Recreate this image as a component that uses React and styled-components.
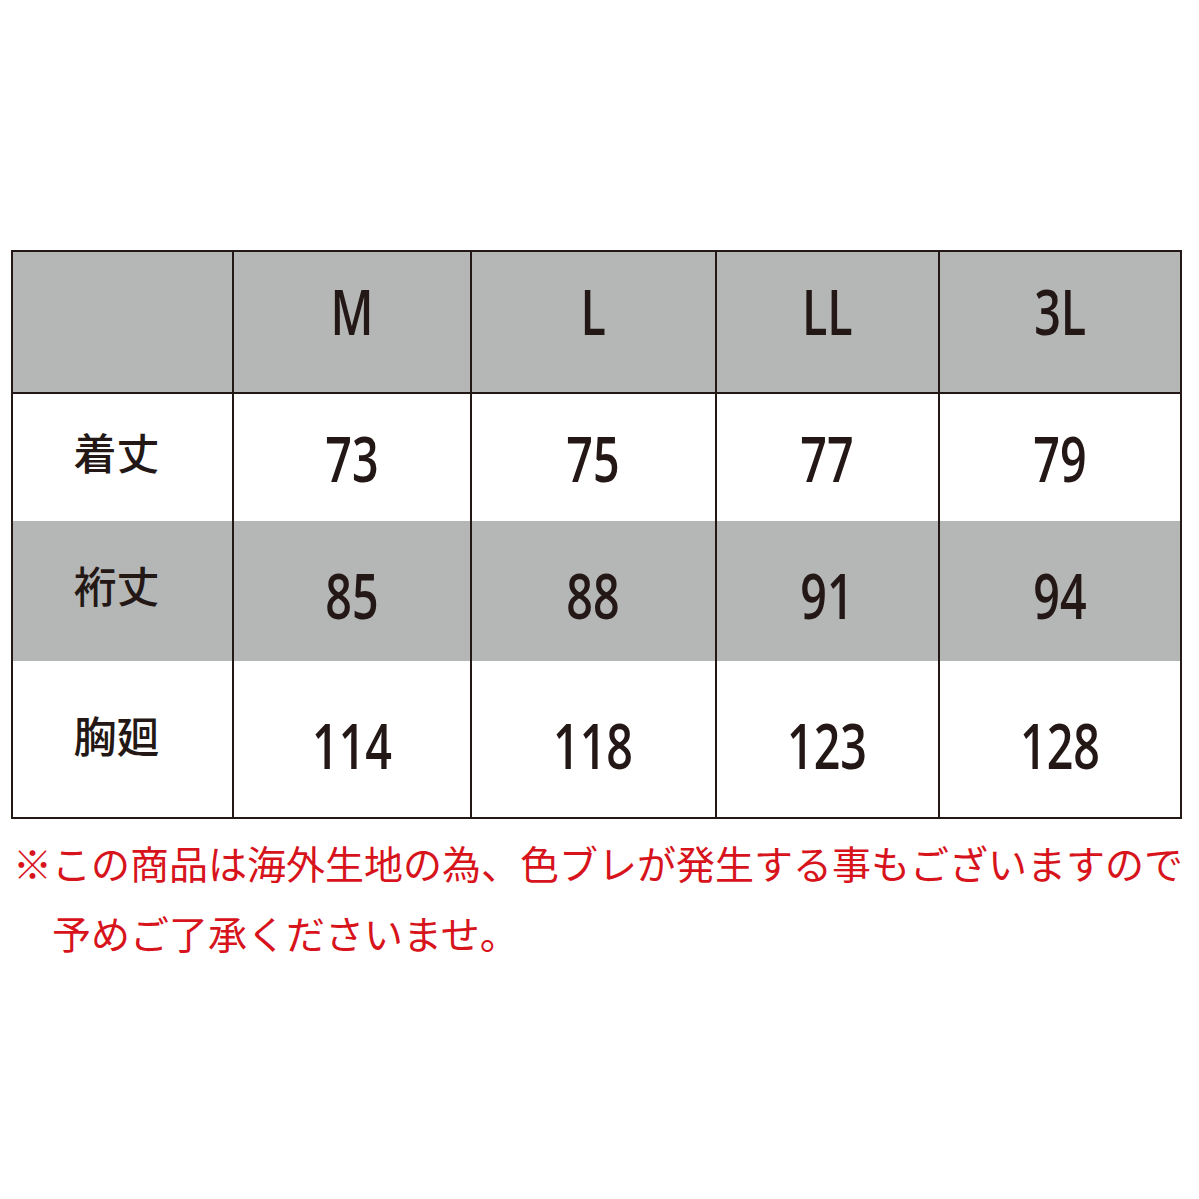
import React from "react";
import styled, { createGlobalStyle } from "styled-components";

const Global = createGlobalStyle`
  html, body { margin: 0; padding: 0; background: #ffffff; }
  body { width: 1199px; height: 1199px; overflow: hidden; }
`;

const COLS = "219px 238px 245px 223px 242px";
const INK = "#231815";
const GRAY = "#b5b6b6";

const Page = styled.div`
  padding-top: 250px;
  padding-left: 11px;
`;

const Table = styled.div`
  box-sizing: border-box;
  width: 1171px;
  border: 2px solid ${INK};
  display: flex;
  flex-direction: column;
`;

const Row = styled.div`
  display: grid;
  grid-template-columns: ${COLS};
  height: ${(p) => p.$h}px;
  background: ${(p) => (p.$gray ? GRAY : "#ffffff")};
  box-sizing: border-box;
  border-bottom: ${(p) => (p.$rule ? `2px solid ${INK}` : "none")};
`;

const Cell = styled.div`
  box-sizing: border-box;
  display: flex;
  align-items: center;
  justify-content: center;
  border-left: ${(p) => (p.$first ? "none" : `2px solid ${INK}`)};
  padding-top: ${(p) => p.$pt || 0}px;
  padding-bottom: ${(p) => p.$pb || 0}px;
  padding-right: ${(p) => p.$pr || 0}px;
`;

const Num = styled.span`
  display: inline-block;
  font-family: "Open Sans", "Liberation Sans", sans-serif;
  font-size: 63px;
  font-weight: 600;
  line-height: 1;
  color: ${INK};
  transform: scaleX(0.74);
  transform-origin: center;
`;

const Label = styled.span`
  font-family: "Noto Sans CJK JP", "Noto Sans", sans-serif;
  font-size: 43px;
  line-height: 1;
  color: ${INK};
  font-weight: 500;
`;

const Note = styled.div`
  font-family: "Noto Sans CJK JP", "Noto Sans", sans-serif;
  font-size: 39px;
  line-height: 70px;
  color: #d7131c;
  margin-top: 8px;
  padding-left: 2px;
  white-space: nowrap;
`;

const NoteLine = styled.div`
  padding-left: ${(p) => p.$indent || 0}px;
`;

const header = ["M", "L", "LL", "3L"];
const rows = [
  { label: "着丈", vals: ["73", "75", "77", "79"], h: 127, gray: false, pt: 0, lpb: 12 },
  { label: "裄丈", vals: ["85", "88", "91", "94"], h: 140, gray: true, pt: 6, lpb: 14 },
  { label: "胸廻", vals: ["114", "118", "123", "128"], h: 156, gray: false, pt: 10, lpb: 10 },
];

export default function App() {
  return (
    <Page>
      <Global />
      <Table>
        <Row $h={142} $gray $rule>
          <Cell $first />
          {header.map((t) => (
            <Cell key={t} $pb={24}>
              <Num>{t}</Num>
            </Cell>
          ))}
        </Row>
        {rows.map((r) => (
          <Row key={r.label} $h={r.h} $gray={r.gray}>
            <Cell $first $pr={12} $pb={r.lpb}>
              <Label>{r.label}</Label>
            </Cell>
            {r.vals.map((v) => (
              <Cell key={v} $pt={r.pt}>
                <Num>{v}</Num>
              </Cell>
            ))}
          </Row>
        ))}
      </Table>
      <Note>
        <NoteLine>※この商品は海外生地の為、色ブレが発生する事もございますので</NoteLine>
        <NoteLine $indent={39}>予めご了承くださいませ。</NoteLine>
      </Note>
    </Page>
  );
}
